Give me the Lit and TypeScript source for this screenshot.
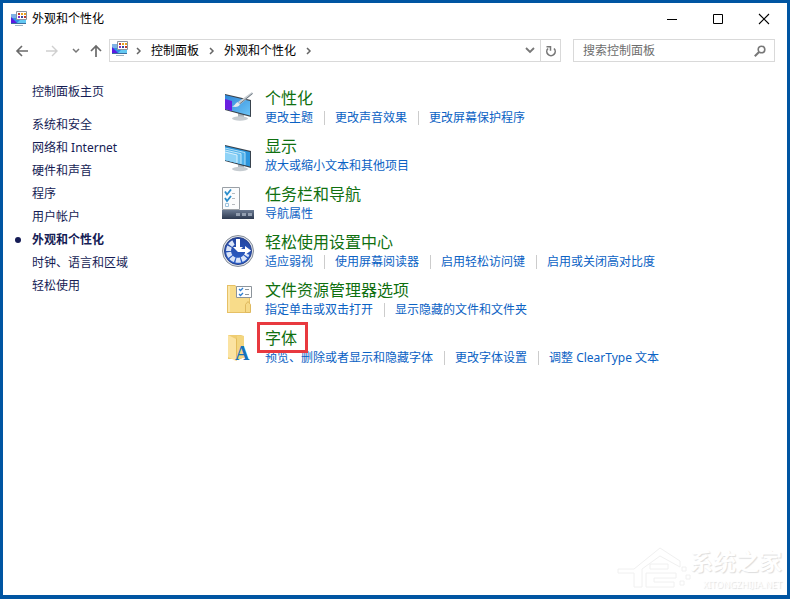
import { LitElement, html, css, svg, nothing } from "lit";
import { customElement } from "lit/decorators.js";

interface Category {
  title: string;
  icon: unknown;
  links: string[];
  marked?: boolean;
}

const panelIcon = html`<svg class="panel-icon" width="16" height="16" viewBox="0 0 16 16" aria-hidden="true">
  <path d="M0 3h15v9H0z" fill="#2f8fe8" />
  <path d="M0 3h5v4H0z" fill="#7fb2e6" />
  <path d="M0 6l6 6H0z" fill="#5a18e0" />
  <path d="M6 12l4-4h5v4z" fill="#63c8f2" />
  <path d="M0 12h15v1H0z" fill="#3c6f9f" />
  <path d="M4 14h8v1H4z" fill="#9fb4c4" />
  <path d="M5.500 .500h10v8h-10z" fill="#fff" stroke="#8a93a0" />
  <path d="M7 2h2v2H7z" fill="#c03a2b" />
  <path d="M10 2h2v2h-2z" fill="#e8a020" />
  <path d="M13 2h2v2h-2z" fill="#e8a020" />
  <path d="M7 5h2v2H7z" fill="#7a2bd0" />
  <path d="M10 5h2v2h-2z" fill="#3a4a9a" />
  <path d="M13 5h2v2h-2z" fill="#c03a2b" />
</svg>`;

const personalizeIcon = html`<svg width="34" height="34" viewBox="0 0 34 34" aria-hidden="true">
  <defs>
    <linearGradient id="sky" x1="0" y1="0" x2="1" y2="1">
      <stop offset="0" stop-color="#2f86d8" /><stop offset="1" stop-color="#6cc4f6" />
    </linearGradient>
  </defs>
  <path d="M17 22l6 2v4h-6z" fill="#aab3ba" />
  <ellipse cx="19" cy="28.500" rx="8" ry="2.200" fill="#c6ccd1" />
  <path d="M4 4l26 6v17L4 20z" fill="#39434d" />
  <path d="M4 5l25 6v14.500L4 19z" fill="url(#sky)" />
  <path d="M4 9l7 2v10L4 19z" fill="#6a1fe0" />
  <path d="M31 2L17 12l2 2.500L32 4z" fill="#c9ced3" />
  <path d="M31.500 3.500L18.500 14" stroke="#6f7982" fill="none" />
  <path d="M16.500 12l2.500 2.500c-2 3-5 2.500-8 2 2.500-.500 3-3 5.500-4.500z" fill="#e5e9ec" />
</svg>`;

const displayIcon = html`<svg width="34" height="34" viewBox="0 0 34 34" aria-hidden="true">
  <path d="M17 25l6 2v4h-6z" fill="#aab3ba" />
  <ellipse cx="19" cy="31" rx="8" ry="2.200" fill="#c6ccd1" />
  <path d="M4 7l26 6v17L4 23z" fill="#39434d" />
  <path d="M4 8l25 6v14.500L4 22z" fill="#2b95dc" />
  <path d="M4 10l20 4.500V27L4 22z" fill="#4fb0ea" />
  <path d="M4 10l20 4.500V27" fill="none" stroke="#b2e0f8" />
  <path d="M4 12l16 3.700V26L4 22z" fill="#6fc2f0" />
  <path d="M4 12l16 3.700V26" fill="none" stroke="#c5e9fb" />
  <path d="M4 14l12 3v8L4 22z" fill="#8fd3f7" />
  <path d="M4 14l12 3v8" fill="none" stroke="#daf1fd" />
</svg>`;

const taskbarIcon = html`<svg width="34" height="34" viewBox="0 0 34 34" aria-hidden="true">
  <defs>
    <linearGradient id="bar" x1="0" y1="0" x2="0" y2="1">
      <stop offset="0" stop-color="#6b7a92" /><stop offset="1" stop-color="#2c3950" />
    </linearGradient>
  </defs>
  <path d="M1.500 1.500h17v22h-17z" fill="#fbfcfd" stroke="#9aa0a6" />
  <path d="M4 5.500l2 3 4-5M4 12l2 3 4-5" fill="none" stroke="#2a8dcc" stroke-width="1.800" />
  <path d="M4.500 17.500h3v3h-3z" fill="none" stroke="#9fc3dc" />
  <path d="M11 7.500h3M11 12.500h3M11 18.500h3" stroke="#b5babf" />
  <path d="M1 24h32v9H1z" fill="url(#bar)" />
  <path d="M15 27h4v3h-4zM21 27h4v3h-4zM27 27h4v3h-4z" fill="#929eb0" />
</svg>`;

const easeIcon = html`<svg width="34" height="34" viewBox="0 0 34 34" aria-hidden="true">
  <defs>
    <linearGradient id="ball" x1="0" y1="0" x2="0" y2="1">
      <stop offset="0" stop-color="#24459f" /><stop offset="1" stop-color="#2c62cc" />
    </linearGradient>
  </defs>
  <circle cx="17" cy="17" r="15.500" fill="#dfe3e9" stroke="#858d99" />
  <circle cx="17" cy="17" r="13.500" fill="url(#ball)" stroke="#27408a" />
  <path d="M12.500 8.500A9.500 9.500 0 1 0 26 20" fill="none" stroke="#dbe5f8" stroke-width="5" stroke-dasharray="4.500 1.200" />
  <path d="M15 5h4v8h3l-5 5-5-5h3z" fill="#fff" />
  <path d="M17 15h7v-3l6 4.500-6 4.500v-3h-7z" fill="#fff" />
</svg>`;

const explorerIcon = html`<svg width="34" height="34" viewBox="0 0 34 34" aria-hidden="true">
  <path d="M6 3h8l2 2h13v26H6z" fill="#e6c065" />
  <path d="M7 4h7l2 2h12v24H7z" fill="#f8dc8a" />
  <path d="M7 4h2v26H7z" fill="#fbe7ab" />
  <path d="M24.500 30.500v-8l2.500-3 2.500 3v8z" fill="#f6da88" stroke="#dfb95f" />
  <path d="M15.500 4.500h15v11h-15z" fill="#fff" stroke="#8c949b" />
  <path d="M18 7l1.500 1.500L22 6M18 12l1.500 1.500L22 11" fill="none" stroke="#2f7ed0" stroke-width="1.300" />
  <path d="M24 7.500h4M24 12.500h4" stroke="#8f979e" />
</svg>`;

const fontsIcon = html`<svg width="34" height="34" viewBox="0 0 34 34" aria-hidden="true">
  <path d="M7 5h13l3 1v21l-3 2H7z" fill="#efcd72" />
  <path d="M16 6h7v22h-7z" fill="#f3d680" />
  <path d="M7 5l8 4v22l-8-4z" fill="#fbe3a2" />
  <path d="M15 9l1-1v22l-1 1z" fill="#e3bc5c" />
  <text class="font-glyph" x="14" y="30">A</text>
</svg>`;

const watermarkLogo = svg`
  <path d="M2 24h16L44 3l20 13v6L44 11 26 24v18h-8V28H2z" />
  <path d="M34 19h18v5H34zM30 28h30v5H38v4h20v5H30z" />
  <path d="M66 22h4v4h-4zM70 30h4v4h-4zM64 36h4v4h-4z" />`;

const categories: Category[] = [
  { title: "个性化", icon: personalizeIcon, links: ["更改主题", "更改声音效果", "更改屏幕保护程序"] },
  { title: "显示", icon: displayIcon, links: ["放大或缩小文本和其他项目"] },
  { title: "任务栏和导航", icon: taskbarIcon, links: ["导航属性"] },
  { title: "轻松使用设置中心", icon: easeIcon, links: ["适应弱视", "使用屏幕阅读器", "启用轻松访问键", "启用或关闭高对比度"] },
  { title: "文件资源管理器选项", icon: explorerIcon, links: ["指定单击或双击打开", "显示隐藏的文件和文件夹"] },
  { title: "字体", icon: fontsIcon, links: ["预览、删除或者显示和隐藏字体", "更改字体设置", "调整 ClearType 文本"], marked: true },
];

const sections = ["系统和安全", "网络和 Internet", "硬件和声音", "程序", "用户帐户", "外观和个性化", "时钟、语言和区域", "轻松使用"];
const currentSection = "外观和个性化";

const crumbArrow = html`<svg width="7" height="8" viewBox="0 0 7 8" aria-hidden="true">
  <path d="M2 1l3 3-3 3" fill="none" stroke="#666" stroke-width="1.500" />
</svg>`;

@customElement("app-root")
export class AppRoot extends LitElement {
  static styles = css`
    :host {
      display: block;
      font-family: "Noto Sans", "Noto Sans CJK SC", sans-serif;
      font-size: 12px;
      line-height: 18px;
      color: #000;
    }
    * {
      box-sizing: border-box;
    }
    svg {
      display: block;
      flex: none;
      overflow: visible;
    }
    button {
      display: flex;
      align-items: center;
      justify-content: center;
      padding: 0;
      border: 0;
      background: none;
      font: inherit;
    }
    a {
      color: inherit;
      text-decoration: none;
      white-space: nowrap;
    }
    a:hover {
      text-decoration: underline;
    }
    .window {
      position: relative;
      display: flex;
      flex-direction: column;
      min-height: 100vh;
      background: #fff;
      border: 3px solid #0055a2;
      border-bottom-width: 4px;
    }
    .titlebar {
      display: flex;
      align-items: center;
      height: 31px;
      padding-left: 8px;
      gap: 5px;
    }
    h1 {
      flex: 1;
      margin: 0;
      font-size: 12px;
      font-weight: 400;
    }
    .controls {
      display: flex;
    }
    .controls button {
      width: 46px;
      height: 30px;
    }
    .toolbar {
      display: flex;
      align-items: center;
      height: 33px;
      padding: 0 12px 0 11px;
    }
    .history {
      display: flex;
      align-items: center;
      width: 95px;
    }
    .history button {
      height: 20px;
    }
    .arrow {
      width: 16px;
    }
    .forward {
      margin-left: 14px;
    }
    .recent {
      width: 12px;
      margin: 0 6px 0 10px;
    }
    .address,
    .search {
      display: flex;
      align-items: center;
      height: 23px;
      border: 1px solid #d9d9d9;
    }
    .address {
      flex: 1;
      padding-left: 2px;
    }
    .address > .panel-icon {
      align-self: flex-start;
      margin-top: 1px;
    }
    .crumbs {
      display: flex;
      align-items: center;
      flex: 1;
      gap: 9px;
      padding-left: 7px;
    }
    .address button {
      width: 20px;
      height: 21px;
    }
    .address .refresh {
      border-left: 1px solid #d9d9d9;
    }
    .search {
      width: 202px;
      margin-left: 12px;
      padding: 0 8px 0 9px;
    }
    .search input {
      flex: 1;
      min-width: 0;
      padding: 0;
      border: 0;
      outline: 0;
      background: none;
      font: inherit;
      color: #000;
    }
    .search input::placeholder {
      color: #6d6d6d;
      opacity: 1;
    }
    .body {
      display: flex;
      flex: 1;
      padding-top: 13px;
    }
    .sidebar {
      flex: none;
      width: 218px;
      padding-left: 29px;
      color: #151c55;
      line-height: 23px;
    }
    .home {
      display: block;
      margin-bottom: 10px;
    }
    ul {
      margin: 0;
      padding: 0;
      list-style: none;
    }
    .section {
      position: relative;
    }
    .current {
      font-weight: 700;
    }
    .current::before {
      content: "";
      position: absolute;
      left: -17px;
      top: 9px;
      width: 6px;
      height: 6px;
      border-radius: 50%;
      background: #151c55;
    }
    .categories {
      display: flex;
      flex-direction: column;
      gap: 8px;
      padding-top: 8px;
    }
    .category {
      display: flex;
      gap: 10px;
      height: 40px;
    }
    .category > svg {
      margin-top: 2px;
    }
    h2 {
      position: relative;
      width: fit-content;
      margin: 0;
      font-size: 16px;
      line-height: 21px;
      font-weight: 400;
      color: #107010;
    }
    .marked::after {
      content: "";
      position: absolute;
      inset: -6px -11px -4px -8px;
      border: 3px solid #e8393f;
    }
    .links {
      display: flex;
      color: #0b62c4;
    }
    .links li {
      display: flex;
      align-items: center;
    }
    .links li + li::before {
      content: "";
      width: 1px;
      height: 14px;
      margin: 0 10px 0 11px;
      background: #ccc;
    }
    .font-glyph {
      font: 700 20px "Liberation Serif", serif;
      fill: #1673b8;
    }
    .watermark {
      position: absolute;
      right: 5px;
      bottom: 4px;
      display: flex;
      align-items: center;
      color: #fff;
      text-shadow: 1px 1px 1px #ddd;
    }
    .watermark svg {
      fill: #fff;
      stroke: #f0f0f0;
    }
    .brand {
      font-size: 23px;
      line-height: 34px;
      font-weight: 700;
    }
    .site {
      font-size: 9px;
      line-height: 13px;
      text-align: right;
    }
  `;

  render() {
    return html`
      <div class="window">
        <header class="titlebar">
          ${panelIcon}
          <h1>外观和个性化</h1>
          <div class="controls">
            <button aria-label="最小化">
              <svg width="10" height="10" viewBox="0 0 10 10"><path d="M0 5.500h10" stroke="#000" /></svg>
            </button>
            <button aria-label="最大化">
              <svg width="10" height="10" viewBox="0 0 10 10"><path d="M.500 .500h9v9h-9z" fill="none" stroke="#000" /></svg>
            </button>
            <button aria-label="关闭">
              <svg width="10" height="10" viewBox="0 0 10 10"><path d="M0 0l10 10M10 0L0 10" stroke="#000" stroke-width="1.100" /></svg>
            </button>
          </div>
        </header>
        <div class="toolbar">
          <nav class="history" aria-label="历史记录">
            <button class="arrow" aria-label="后退">
              <svg width="12" height="12" viewBox="0 0 12 12"><path d="M12 6H1M6 1L1 6l5 5" fill="none" stroke="#6a6a6a" stroke-width="1.600" /></svg>
            </button>
            <button class="arrow forward" aria-label="前进" disabled>
              <svg width="12" height="12" viewBox="0 0 12 12"><path d="M0 6h11M6 1l5 5-5 5" fill="none" stroke="#cfcfcf" stroke-width="1.400" /></svg>
            </button>
            <button class="recent" aria-label="最近浏览的位置">
              <svg width="6" height="5" viewBox="0 0 6 5"><path d="M0 1l3 3 3-3" fill="none" stroke="#777" stroke-width="1.500" /></svg>
            </button>
            <button class="arrow" aria-label="上移">
              <svg width="12" height="12" viewBox="0 0 12 12"><path d="M6 12V1M1 6l5-5 5 5" fill="none" stroke="#6a6a6a" stroke-width="1.700" /></svg>
            </button>
          </nav>
          <div class="address">
            ${panelIcon}
            <nav class="crumbs" aria-label="地址">
              ${crumbArrow}<a href="#">控制面板</a>${crumbArrow}<a href="#">外观和个性化</a>${crumbArrow}
            </nav>
            <button aria-label="以前的位置">
              <svg width="10" height="7" viewBox="0 0 10 7"><path d="M1 1l4 4 4-4" fill="none" stroke="#777" stroke-width="1.800" /></svg>
            </button>
            <button class="refresh" aria-label="刷新">
              <svg width="12" height="12" viewBox="0 0 12 12">
                <path d="M9 3.500A4.200 4.200 0 1 1 3 3.500" fill="none" stroke="#777" stroke-width="1.600" />
                <path d="M1.500 1.800h4v4" fill="none" stroke="#777" stroke-width="1.500" />
              </svg>
            </button>
          </div>
          <label class="search">
            <input type="text" placeholder="搜索控制面板" aria-label="搜索控制面板" />
            <svg width="12" height="12" viewBox="0 0 12 12" aria-hidden="true">
              <circle cx="7.500" cy="4.500" r="3.300" fill="none" stroke="#777" stroke-width="1.600" />
              <path d="M5 7L.800 11.200" stroke="#777" stroke-width="2" />
            </svg>
          </label>
        </div>
        <div class="body">
          <nav class="sidebar" aria-label="控制面板">
            <a class="home" href="#">控制面板主页</a>
            <ul>
              ${sections.map((name) => html`<li class="section ${name === currentSection ? "current" : ""}"><a href="#">${name}</a></li>`)}
            </ul>
          </nav>
          <main class="categories">
            ${categories.map(
              (c) => html`<section class="category">
                ${c.icon}
                <div>
                  <h2 class=${c.marked ? "marked" : nothing}><a href="#">${c.title}</a></h2>
                  <ul class="links">
                    ${c.links.map((name) => html`<li><a href="#">${name}</a></li>`)}
                  </ul>
                </div>
              </section>`
            )}
          </main>
        </div>
        <div class="watermark">
          <svg width="74" height="46" viewBox="0 0 74 46" aria-hidden="true">${watermarkLogo}</svg>
          <div>
            <div class="brand">系统之家</div>
            <div class="site">XITONGZHIJIA.NET</div>
          </div>
        </div>
      </div>
    `;
  }
}
